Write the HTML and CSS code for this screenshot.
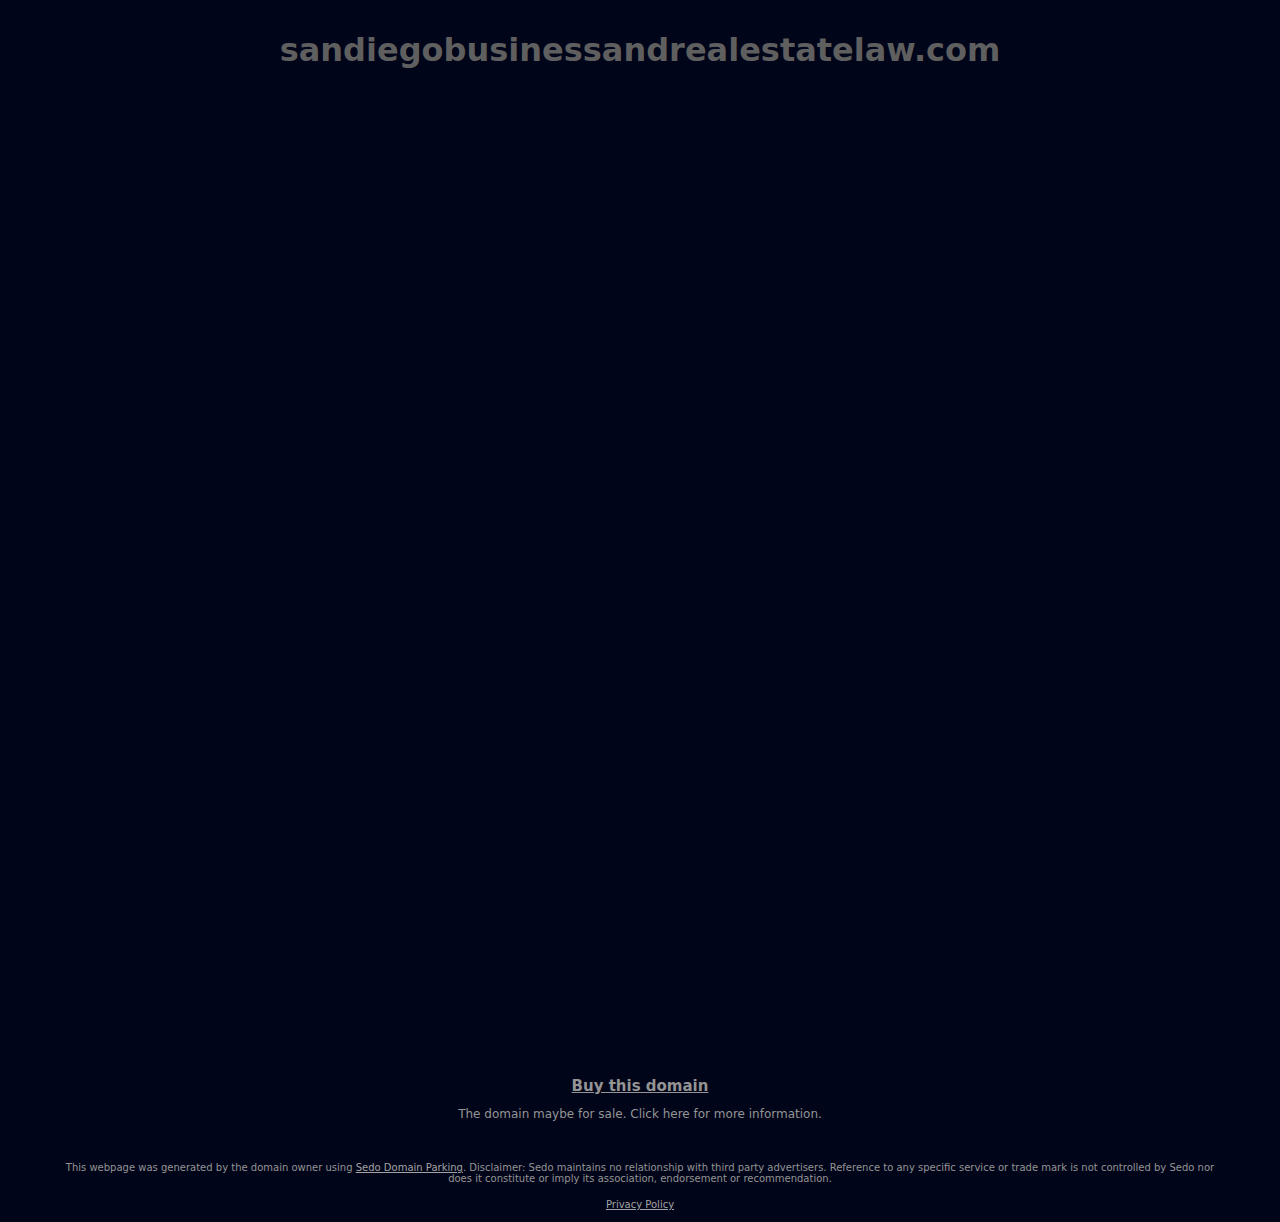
FILE: index.html
```html
<!DOCTYPE html>
<html lang="en">
<head>
<meta charset="utf-8">
<title>sandiegobusinessandrealestatelaw.com</title>
<link rel="stylesheet" href="styles.css">
</head>
<body>
<div class="page">
  <header class="header">
    <h1 class="domain">sandiegobusinessandrealestatelaw.com</h1>
  </header>
  <main class="content"></main>
  <section class="sale">
    <a class="buy" href="#">Buy this domain</a>
    <p class="sale-text">The domain maybe for sale. Click here for more information.</p>
  </section>
  <footer class="footer">
    <p class="disclaimer">This webpage was generated by the domain owner using <a href="#">Sedo Domain Parking</a>. Disclaimer: Sedo maintains no relationship with third party advertisers. Reference to any specific service or trade mark is not controlled by Sedo nor does it constitute or imply its association, endorsement or recommendation.</p>
    <p class="privacy"><a href="#">Privacy Policy</a></p>
  </footer>
</div>
</body>
</html>
```

FILE: styles.css
```css
html, body {
  margin: 0;
  padding: 0;
  background: #01051a;
}
body {
  font-family: "DejaVu Sans", sans-serif;
  color: #999;
}
.page {
  min-height: 100vh;
  display: flex;
  flex-direction: column;
  box-sizing: border-box;
}
.header {
  padding-top: 28px;
  text-align: center;
}
.domain {
  margin: 0;
  font-size: 32px;
  line-height: 44px;
  font-weight: bold;
  color: #5f5f5f;
}
.content {
  flex: 1;
}
.sale {
  text-align: center;
}
.buy {
  display: inline-block;
  font-size: 15px;
  line-height: 19px;
  font-weight: bold;
  color: #949494;
  text-decoration: underline;
}
.sale-text {
  margin: 10px 0 0;
  font-size: 12px;
  line-height: 16px;
  color: #949494;
}
.footer {
  padding: 40px 60px 11px;
  text-align: center;
  font-size: 10px;
  color: #949494;
}
.disclaimer {
  margin: 0;
  line-height: 11px;
}
.footer a {
  color: #a3a3a3;
}
.privacy {
  margin: 14px 0 0;
  line-height: 13px;
}
```
